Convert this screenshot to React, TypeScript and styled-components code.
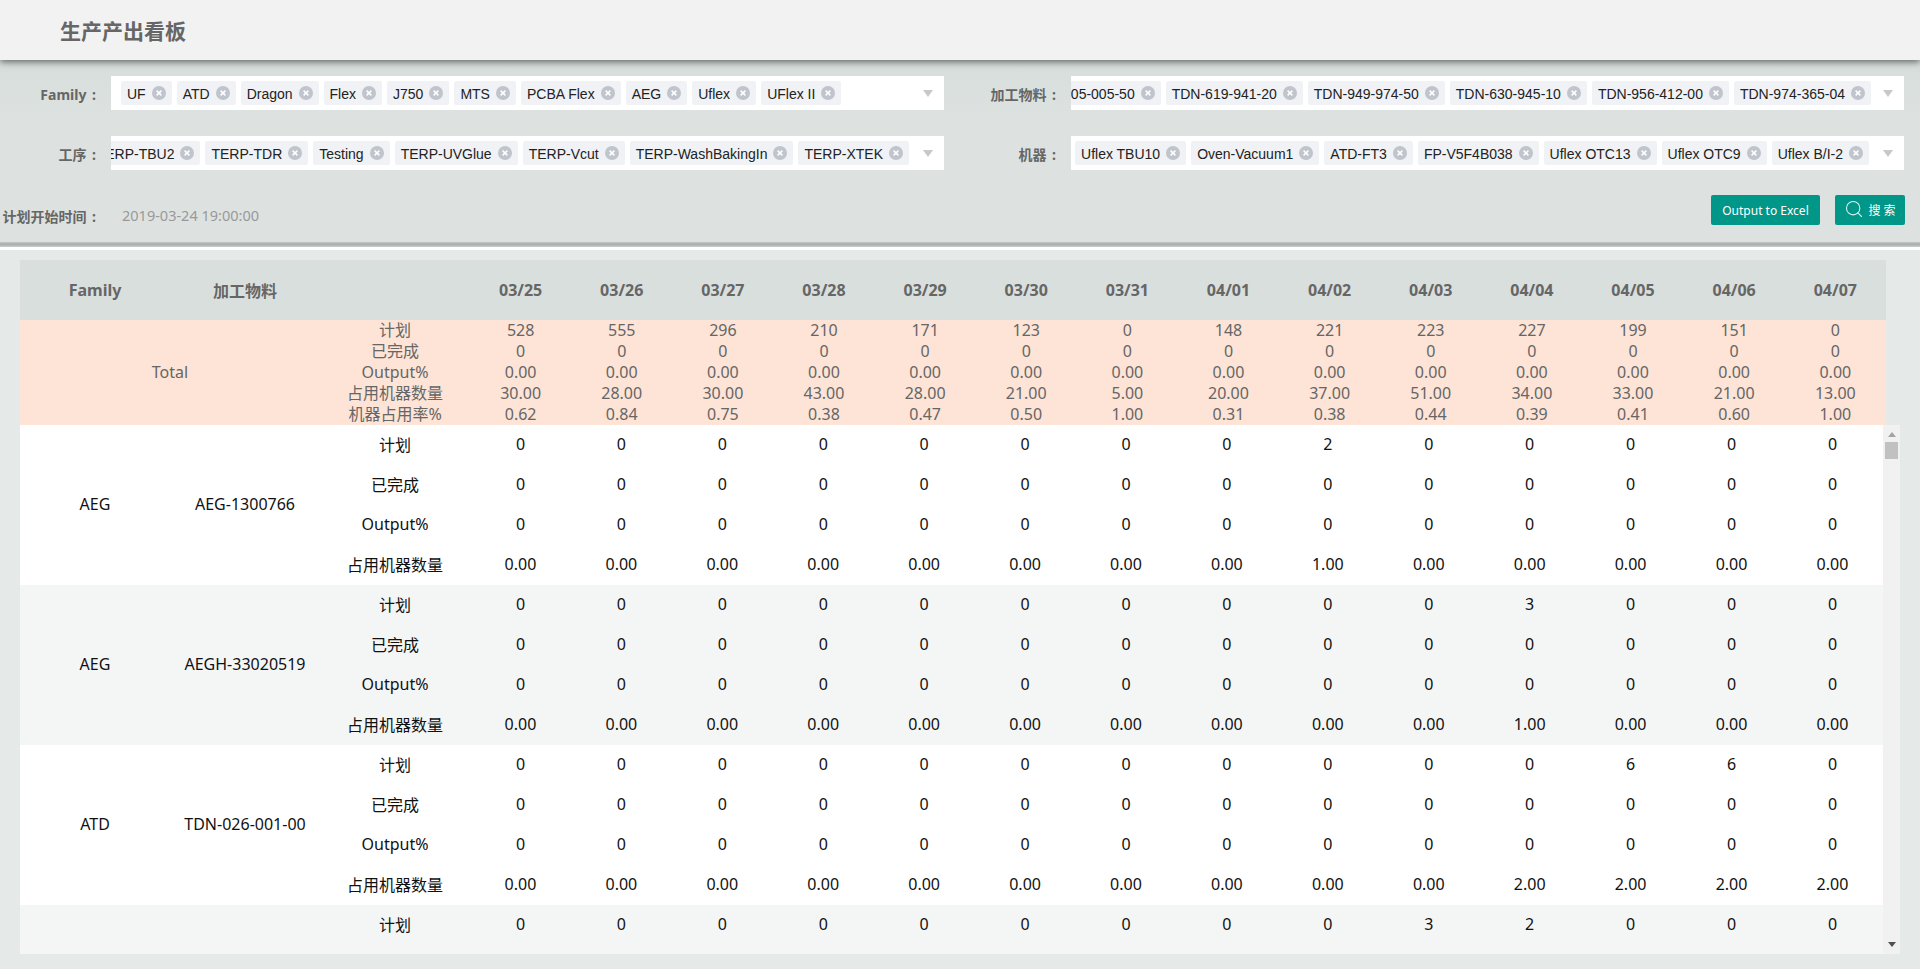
import React from 'react';
import styled, { createGlobalStyle } from 'styled-components';
import { Search } from 'lucide-react';

const UI_FONT = `"Noto Sans", "Noto Sans CJK SC", sans-serif`;

const GlobalStyle = createGlobalStyle`
    html, body {
        margin: 0;
        height: 100%;
        overflow: hidden;
        font-family: ${UI_FONT};
    }
    * {
        box-sizing: border-box;
    }
`;

const Page = styled.div`
    display: flex;
    flex-direction: column;
    height: 100vh;
    background-color: #e5eae8;
`;

const TitleBar = styled.header`
    position: relative;
    z-index: 2;
    flex: none;
    height: 60px;
    padding-left: 60px;
    background-color: #f2f2f2;
    box-shadow: 0 2px 7px rgba(0, 0, 0, 0.55);
`;

const Title = styled.h1`
    margin: 0;
    font-size: 21px;
    line-height: 62px;
    font-weight: 700;
    color: #666;
`;

const FilterPanel = styled.section`
    flex: none;
    height: 182px;
    padding-top: 16px;
    background: linear-gradient(#d6dedb, #dde2e0 60px);
`;

const FilterGrid = styled.div`
    display: grid;
    grid-template-columns: 1fr 1fr;
    row-gap: 26px;
`;

const Field = styled.div`
    display: flex;
    align-items: center;
    gap: 15px;
    padding-right: 16px;
    min-width: 0;
`;

const Label = styled.label`
    flex: none;
    width: 96px;
    padding-top: 2px;
    text-align: right;
    font-size: 14px;
    font-weight: 700;
    word-spacing: 2px;
    color: #666;
    white-space: nowrap;
`;

const Select = styled.div`
    flex: 1;
    display: flex;
    align-items: center;
    min-width: 0;
    height: 34px;
    background-color: #fff;
`;

const TagStrip = styled.div<{ $scrollEnd?: number }>`
    flex: 1;
    display: flex;
    gap: 5px;
    min-width: 0;
    overflow: hidden;
    justify-content: ${props => (props.$scrollEnd !== undefined ? 'flex-end' : 'flex-start')};
    padding-left: ${props => (props.$scrollEnd !== undefined ? 0 : 10)}px;
    padding-right: ${props => props.$scrollEnd ?? 0}px;
`;

const Tag = styled.span`
    flex: none;
    display: inline-flex;
    align-items: center;
    gap: 6px;
    height: 24px;
    padding: 0 6px;
    background-color: #f0f2f5;
    border-radius: 2px;
    font-family: "Liberation Sans", "Noto Sans CJK SC", sans-serif;
    font-size: 14px;
    color: #222;
    white-space: nowrap;
`;

const TagText = styled.span`
    padding-top: 1px;
`;

const TagClose = styled.svg`
    flex: none;
    width: 14px;
    height: 14px;
`;

const Caret = styled.span`
    flex: none;
    width: 0;
    height: 0;
    margin: 0 11px;
    border-left: 5.5px solid transparent;
    border-right: 5.5px solid transparent;
    border-top: 7px solid #c8c8c8;
`;

const ActionRow = styled.div`
    display: flex;
    align-items: center;
    margin-top: 25px;
    padding-right: 15px;
    height: 30px;
`;

const DateGroup = styled.div`
    display: flex;
    align-items: center;
    padding-top: 9px;
`;

const DateValue = styled.span`
    margin-left: 26px;
    font-size: 14.5px;
    color: #999;
`;

const Buttons = styled.div`
    display: flex;
    gap: 15px;
    margin-left: auto;
`;

const Button = styled.button<{ $width: number }>`
    display: inline-flex;
    align-items: center;
    justify-content: center;
    gap: 4px;
    width: ${props => props.$width}px;
    height: 30px;
    padding: 0;
    border: none;
    border-radius: 2px;
    background-color: #009688;
    font-family: ${UI_FONT};
    font-size: 12px;
    color: #fff;
    cursor: pointer;
`;

const SearchIcon = styled(Search)`
    margin-top: -3px;
    color: #d8f2ef;
`;

const Divider = styled.div`
    flex: none;
    height: 8px;
    border-bottom: 3px solid #fff;
    background: linear-gradient(#c2c7c5, #a9adab 45%, #c9cdcb);
`;

const TableArea = styled.main`
    flex: 1;
    display: flex;
    flex-direction: column;
    min-height: 0;
    padding: 10px 20px 15px;
`;

const Grid = styled.table<{ $width?: number }>`
    width: ${props => (props.$width ? `${props.$width}px` : '100%')};
    border-collapse: collapse;
    table-layout: fixed;
    text-align: center;
`;

const HeadRow = styled.tr`
    height: 60px;
    background-color: #d9dfdd;
`;

const HeadCell = styled.th`
    padding: 0;
    font-size: 16px;
    font-weight: 700;
    color: #666;
`;

const TotalRow = styled.tr`
    height: 21px;
    background-color: #fde4d6;
`;

const TotalCell = styled.td`
    padding: 0;
    font-size: 16px;
    line-height: 21px;
    color: #666;
`;

const BodyFrame = styled.div`
    flex: 1;
    display: flex;
    min-height: 0;
`;

const BodyViewport = styled.div`
    flex: 1;
    min-width: 0;
    overflow: hidden;
    background-color: #fff;
`;

const BodyRow = styled.tr<{ $shaded: boolean }>`
    height: 40px;
    background-color: ${props => (props.$shaded ? '#f4f6f6' : '#fff')};
`;

const BodyCell = styled.td`
    padding: 0 0 2px;
    font-size: 16px;
    color: #111;
`;

const ScrollRail = styled.div`
    flex: none;
    display: flex;
    flex-direction: column;
    align-items: center;
    width: 17px;
    background-color: #f1f1f1;
`;

const RailArrow = styled.span<{ $down?: boolean }>`
    flex: none;
    width: 0;
    height: 0;
    margin: ${props => (props.$down ? 'auto 0 7px' : '7px 0 5px')};
    border-left: 4.5px solid transparent;
    border-right: 4.5px solid transparent;
    border-top: ${props => (props.$down ? '5px solid #505050' : 'none')};
    border-bottom: ${props => (props.$down ? 'none' : '5px solid #a3a3a3')};
`;

const RailThumb = styled.span`
    flex: none;
    width: 13px;
    height: 17px;
    background-color: #c1c1c1;
`;

const familyTags = ['UF', 'ATD', 'Dragon', 'Flex', 'J750', 'MTS', 'PCBA Flex', 'AEG', 'Uflex', 'UFlex II'];
const materialTags = ['TDN-105-005-50', 'TDN-619-941-20', 'TDN-949-974-50', 'TDN-630-945-10', 'TDN-956-412-00', 'TDN-974-365-04'];
const processTags = ['TERP-TBU2', 'TERP-TDR', 'Testing', 'TERP-UVGlue', 'TERP-Vcut', 'TERP-WashBakingIn', 'TERP-XTEK'];
const machineTags = ['Uflex TBU10', 'Oven-Vacuum1', 'ATD-FT3', 'FP-V5F4B038', 'Uflex OTC13', 'Uflex OTC9', 'Uflex B/I-2'];

const dates = ['03/25', '03/26', '03/27', '03/28', '03/29', '03/30', '03/31', '04/01', '04/02', '04/03', '04/04', '04/05', '04/06', '04/07'];

const zeros = dates.map(() => '0');
const decimalZeros = dates.map(() => '0.00');

const totals = [
    { label: '计划', values: ['528', '555', '296', '210', '171', '123', '0', '148', '221', '223', '227', '199', '151', '0'] },
    { label: '已完成', values: zeros },
    { label: 'Output%', values: decimalZeros },
    { label: '占用机器数量', values: ['30.00', '28.00', '30.00', '43.00', '28.00', '21.00', '5.00', '20.00', '37.00', '51.00', '34.00', '33.00', '21.00', '13.00'] },
    { label: '机器占用率%', values: ['0.62', '0.84', '0.75', '0.38', '0.47', '0.50', '1.00', '0.31', '0.38', '0.44', '0.39', '0.41', '0.60', '1.00'] },
];

// only the days that differ from zero are listed, keyed by column index
interface Group {
    family: string;
    material: string;
    plan: Record<number, string>;
    machines: Record<number, string>;
}

const groups: Group[] = [
    { family: 'AEG', material: 'AEG-1300766', plan: { 8: '2' }, machines: { 8: '1.00' } },
    { family: 'AEG', material: 'AEGH-33020519', plan: { 10: '3' }, machines: { 10: '1.00' } },
    { family: 'ATD', material: 'TDN-026-001-00', plan: { 11: '6', 12: '6' }, machines: { 10: '2.00', 11: '2.00', 12: '2.00', 13: '2.00' } },
    { family: 'ATD', material: 'TDN-026-002-00', plan: { 9: '3', 10: '2' }, machines: { 9: '1.00', 10: '1.00' } },
];

const Columns: React.FC<{ dayWidth: string }> = ({ dayWidth }) => (
    <colgroup>
        <col width="150" />
        <col width="150" />
        <col width="150" />
        {dates.map(date => <col key={date} width={dayWidth} />)}
    </colgroup>
);

const FilterTag: React.FC<{ text: string }> = ({ text }) => (
    <Tag>
        <TagText>{text}</TagText>
        <TagClose viewBox="0 0 14 14">
            <circle cx="7" cy="7" r="7" fill="#c0c4cc" />
            <path d="M4.6 4.6l4.8 4.8M9.4 4.6l-4.8 4.8" stroke="#fff" strokeWidth="1.5" />
        </TagClose>
    </Tag>
);

const FilterField: React.FC<{ label: string; tags: string[]; scrollEnd?: number }> = ({ label, tags, scrollEnd }) => (
    <Field>
        <Label>{label} :</Label>
        <Select>
            <TagStrip $scrollEnd={scrollEnd}>
                {tags.map(tag => <FilterTag key={tag} text={tag} />)}
            </TagStrip>
            <Caret />
        </Select>
    </Field>
);

const withOverrides = (base: string[], overrides: Record<number, string>) =>
    base.map((value, i) => overrides[i] ?? value);

const App: React.FC = () => {
    return (
        <Page>
            <GlobalStyle />
            <TitleBar>
                <Title>生产产出看板</Title>
            </TitleBar>

            <FilterPanel>
                <FilterGrid>
                    <FilterField label="Family" tags={familyTags} />
                    <FilterField label="加工物料" tags={materialTags} scrollEnd={1} />
                    <FilterField label="工序" tags={processTags} scrollEnd={3} />
                    <FilterField label="机器" tags={machineTags} scrollEnd={3} />
                </FilterGrid>
                <ActionRow>
                    <DateGroup>
                        <Label>计划开始时间 :</Label>
                        <DateValue>2019-03-24 19:00:00</DateValue>
                    </DateGroup>
                    <Buttons>
                        <Button $width={109}>Output to Excel</Button>
                        <Button $width={70}>
                            <SearchIcon size={20} strokeWidth={1.3} />
                            搜 索
                        </Button>
                    </Buttons>
                </ActionRow>
            </FilterPanel>
            <Divider />

            <TableArea>
                <Grid $width={1866}>
                    <Columns dayWidth="101.14" />
                    <thead>
                        <HeadRow>
                            <HeadCell>Family</HeadCell>
                            <HeadCell>加工物料</HeadCell>
                            <HeadCell />
                            {dates.map(date => <HeadCell key={date}>{date}</HeadCell>)}
                        </HeadRow>
                    </thead>
                    <tbody>
                        {totals.map((row, i) => (
                            <TotalRow key={row.label}>
                                {i === 0 && <TotalCell colSpan={2} rowSpan={totals.length}>Total</TotalCell>}
                                <TotalCell>{row.label}</TotalCell>
                                {row.values.map((value, col) => <TotalCell key={col}>{value}</TotalCell>)}
                            </TotalRow>
                        ))}
                    </tbody>
                </Grid>
                <BodyFrame>
                    <BodyViewport>
                        <Grid>
                            <Columns dayWidth="100.93" />
                            <tbody>
                                {groups.flatMap((group, g) => {
                                    const rows = [
                                        { label: '计划', values: withOverrides(zeros, group.plan) },
                                        { label: '已完成', values: zeros },
                                        { label: 'Output%', values: zeros },
                                        { label: '占用机器数量', values: withOverrides(decimalZeros, group.machines) },
                                    ];
                                    return rows.map((row, i) => (
                                        <BodyRow key={`${group.material}-${row.label}`} $shaded={g % 2 === 1}>
                                            {i === 0 && <BodyCell rowSpan={rows.length}>{group.family}</BodyCell>}
                                            {i === 0 && <BodyCell rowSpan={rows.length}>{group.material}</BodyCell>}
                                            <BodyCell>{row.label}</BodyCell>
                                            {row.values.map((value, col) => <BodyCell key={col}>{value}</BodyCell>)}
                                        </BodyRow>
                                    ));
                                })}
                            </tbody>
                        </Grid>
                    </BodyViewport>
                    <ScrollRail>
                        <RailArrow />
                        <RailThumb />
                        <RailArrow $down />
                    </ScrollRail>
                </BodyFrame>
            </TableArea>
        </Page>
    );
};

export default App;
